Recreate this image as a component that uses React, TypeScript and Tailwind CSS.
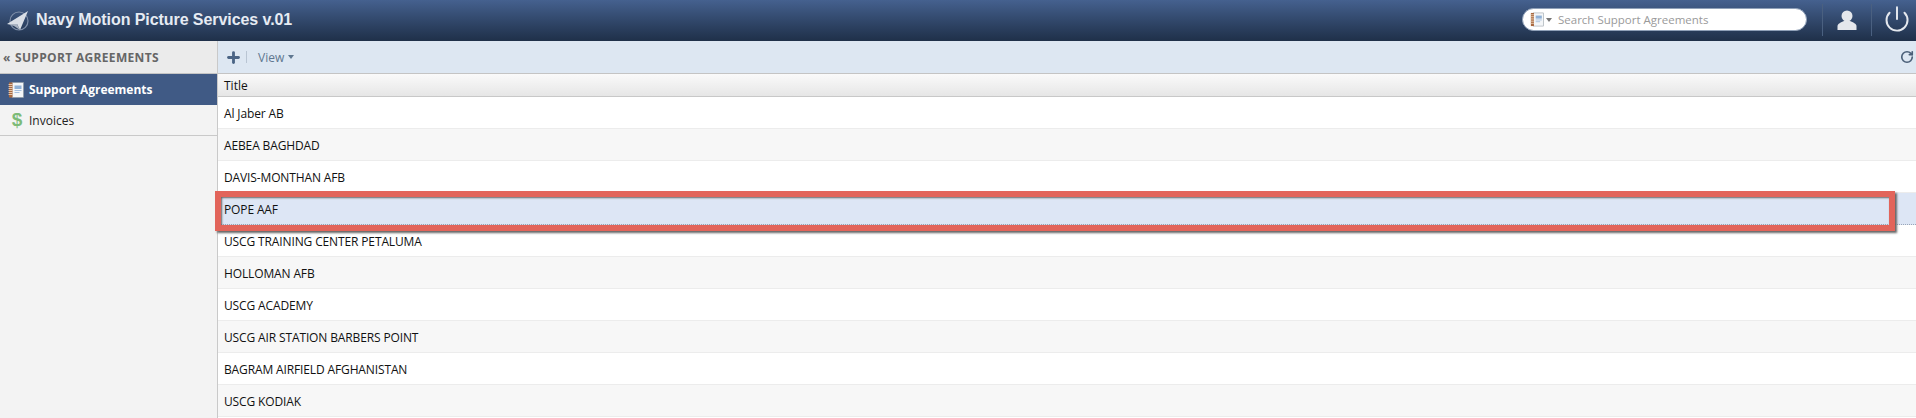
import { Plus, RotateCw, Power } from "lucide-react";

const rows = [
  "Al Jaber AB",
  "AEBEA BAGHDAD",
  "DAVIS-MONTHAN AFB",
  "POPE AAF",
  "USCG TRAINING CENTER PETALUMA",
  "HOLLOMAN AFB",
  "USCG ACADEMY",
  "USCG AIR STATION BARBERS POINT",
  "BAGRAM AIRFIELD AFGHANISTAN",
  "USCG KODIAK",
];

function NotebookIcon({ className }: { className?: string }) {
  return (
    <svg viewBox="0 0 16 16" className={className}>
      <rect x="4" y="0.5" width="11.5" height="15" fill="#f4f6f8" stroke="#8d979f" strokeWidth="0.6" />
      <rect x="1" y="0.5" width="3.5" height="15" fill="#a9683f" />
      <path d="M0.5 2.5h4M0.5 4.5h4M0.5 6.5h4M0.5 8.5h4M0.5 10.5h4M0.5 12.5h4" stroke="#f0dcc6" strokeWidth="0.8" />
      <rect x="6.5" y="3.5" width="7" height="3.5" fill="#8fb0d6" />
      <path d="M6.5 8.5h7M6.5 10.5h5" stroke="#9bb8da" strokeWidth="0.9" />
    </svg>
  );
}

function PlaneLogo() {
  return (
    <svg viewBox="0 0 24 24" className="h-[24px] w-[24px]">
      <circle cx="13" cy="12" r="9" fill="none" stroke="#7e8ea8" strokeWidth="1.2" />
      <path d="M1 15 L22 2 L14 21 L11 15 Z" fill="#d9dee6" />
      <path d="M1 15 L11 15 L14 21 L8 17 Z" fill="#a9b3c2" />
    </svg>
  );
}

function UserIcon() {
  return (
    <svg viewBox="0 0 20 20" className="h-[20px] w-[20px]">
      <circle cx="10" cy="6" r="5.5" fill="#e4e7ec" />
      <path d="M0.5 20 V16 C0.5 13.5 4 12.5 7 11 H13 C16 12.5 19.5 13.5 19.5 16 V20 Z" fill="#e4e7ec" />
    </svg>
  );
}

export default function App() {
  return (
    <div className="relative h-[418px] w-[1916px] overflow-hidden bg-white font-['Open_Sans',sans-serif]">
      <header className="flex h-[41px] items-center bg-gradient-to-b from-[#45618f] to-[#1f3049] pl-[6px]">
        <PlaneLogo />
        <h1 className="ml-[6px] mb-[2px] font-['Liberation_Sans',sans-serif] text-[16px] font-bold tracking-[-0.07px] text-[#e6ebf3]">
          Navy Motion Picture Services v.01
        </h1>
        <div className="ml-auto flex items-center">
          <div className="mb-[2px] flex h-[23px] w-[285px] items-center rounded-full border border-[#8fa0b8] bg-white pl-[7px]">
            <NotebookIcon className="h-[15px] w-[14px]" />
            <span className="ml-[2px] h-0 w-0 border-x-[3px] border-t-[4px] border-x-transparent border-t-[#777]" />
            <span className="ml-[6px] text-[11.5px] text-[#9a9a9a]">Search Support Agreements</span>
          </div>
          <div className="ml-[15px] mb-[2px] flex h-[32px] w-[50px] items-center justify-center border-x border-[#4a6080]">
            <UserIcon />
          </div>
          <div className="mb-[4px] flex w-[44px] justify-center pl-[5px]">
            <Power className="h-[28px] w-[28px] text-[#e4e8ee]" strokeWidth={1.7} />
          </div>
        </div>
      </header>
      <div className="flex">
        <aside className="h-[377px] w-[218px] shrink-0 border-r border-[#c9c9c9] bg-[#f3f3f3]">
          <div className="flex h-[33px] items-center border-b border-[#c4c4c4] bg-[#ebebeb] pl-[3px] pt-[1px] text-[12px] font-bold tracking-[0.33px] text-[#666]">
            <span className="w-[12px]">«</span>
            <span>SUPPORT AGREEMENTS</span>
          </div>
          <div className="flex h-[31px] items-center bg-[#405a85] pl-[8px] text-[12px] font-bold text-white">
            <NotebookIcon className="h-[16px] w-[16px]" />
            <span className="ml-[5px]">Support Agreements</span>
          </div>
          <div className="flex h-[31px] items-center border-b border-[#c9c9c9] pl-[9px] pt-[1px] text-[12px] text-[#222]">
            <span className="w-[16px] text-center font-['Liberation_Sans',sans-serif] text-[19px] font-bold text-[#7dbb78]">$</span>
            <span className="ml-[4px]">Invoices</span>
          </div>
        </aside>
        <main className="min-w-0 flex-1">
          <div className="flex h-[33px] items-center border-b border-[#c4c4c4] bg-[#dde7f2] pl-[7px] pr-[2px]">
            <Plus className="h-[17px] w-[17px] text-[#4a6485]" strokeWidth={4} />
            <span className="ml-[4px] h-[12px] border-l border-[#b9c5d3]" />
            <span className="ml-[11px] pt-[1px] text-[12px] text-[#5f7790]">View</span>
            <span className="ml-[4px] h-0 w-0 border-x-[3.5px] border-t-[4px] border-x-transparent border-t-[#5f7790]" />
            <RotateCw className="ml-auto h-[14px] w-[14px] text-[#4a5f78]" strokeWidth={2.8} />
          </div>
          <div className="flex h-[23px] items-center border-b border-[#c8c8c8] bg-gradient-to-b from-[#fafafa] to-[#e6e6e6] pl-[6px] pt-[1px] text-[12px] text-[#111]">
            Title
          </div>
          {rows.map((title, i) => (
            <div
              key={title}
              className={
                "flex h-[32px] items-center border-b pl-[6px] pt-[3px] text-[12px] tracking-[-0.13px] text-[#111] " +
                (title === "POPE AAF"
                  ? "border-dotted border-[#9aa6b8] bg-[#dde6f5]"
                  : i % 2 === 0
                    ? "border-[#ececec] bg-white"
                    : "border-[#ececec] bg-[#f7f7f7]")
              }
            >
              {title}
            </div>
          ))}
        </main>
      </div>
      {/* red callout drawn on top of the selected row */}
      <div className="absolute left-[215px] top-[191px] h-[40px] w-[1680px] border-[6px] border-[#e2645a] shadow-[2px_2px_2px_#666,inset_1px_1px_2px_#666]" />
    </div>
  );
}
